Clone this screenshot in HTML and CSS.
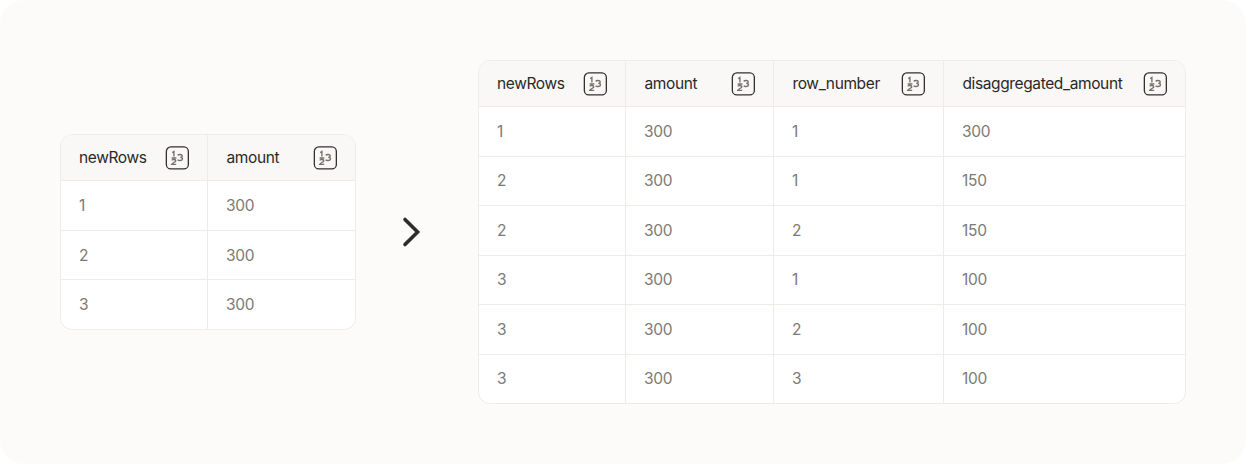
FILE: index.html
```html
<!DOCTYPE html>
<html lang="en">
<head>
<meta charset="utf-8">
<title>Disaggregated amount</title>
<link rel="stylesheet" href="styles.css">
</head>
<body>
<svg class="defs" width="0" height="0" aria-hidden="true">
  <symbol id="num" viewBox="0 0 24 24">
    <rect x="1.35" y="0.95" width="22" height="22" rx="4.5" fill="none" stroke="#33302e" stroke-width="1.3"/>
    <path d="M7.2 6.7 8.9 5.6V10.6M6.6 12H11.4M6.9 14.4C7.1 13.2 10.8 13 10.8 14.9 10.8 16 7.1 17 6.7 18.4H11.2" fill="none" stroke="#77726d" stroke-width="1.4"/>
    <path d="M12.8 9.3C13.4 8.2 17.2 8.1 17.2 9.9 17.2 10.9 16.2 11.4 15.2 11.4 16.4 11.4 17.5 11.8 17.5 13 17.5 14.9 13.4 14.9 12.7 13.6" fill="none" stroke="#77726d" stroke-width="1.4"/>
  </symbol>
</svg>
<main class="canvas">
  <section class="table left-table">
    <div class="row head">
      <div class="cell">newRows<svg class="num"><use href="#num"/></svg></div>
      <div class="cell">amount<svg class="num"><use href="#num"/></svg></div>
    </div>
    <div class="row"><div class="cell">1</div><div class="cell">300</div></div>
    <div class="row"><div class="cell">2</div><div class="cell">300</div></div>
    <div class="row"><div class="cell">3</div><div class="cell">300</div></div>
  </section>
  <svg class="chevron" viewBox="0 0 20 32" width="20" height="32" aria-hidden="true">
    <path d="M4 3.4 16.6 16 4 28.6" fill="none" stroke="#2e2c2a" stroke-width="3.6" stroke-linecap="round" stroke-linejoin="miter"/>
  </svg>
  <section class="table right-table">
    <div class="row head">
      <div class="cell">newRows<svg class="num"><use href="#num"/></svg></div>
      <div class="cell">amount<svg class="num"><use href="#num"/></svg></div>
      <div class="cell">row_number<svg class="num"><use href="#num"/></svg></div>
      <div class="cell">disaggregated_amount<svg class="num"><use href="#num"/></svg></div>
    </div>
    <div class="row"><div class="cell">1</div><div class="cell">300</div><div class="cell">1</div><div class="cell">300</div></div>
    <div class="row"><div class="cell">2</div><div class="cell">300</div><div class="cell">1</div><div class="cell">150</div></div>
    <div class="row"><div class="cell">2</div><div class="cell">300</div><div class="cell">2</div><div class="cell">150</div></div>
    <div class="row"><div class="cell">3</div><div class="cell">300</div><div class="cell">1</div><div class="cell">100</div></div>
    <div class="row"><div class="cell">3</div><div class="cell">300</div><div class="cell">2</div><div class="cell">100</div></div>
    <div class="row"><div class="cell">3</div><div class="cell">300</div><div class="cell">3</div><div class="cell">100</div></div>
  </section>
</main>
</body>
</html>
```
FILE: styles.css
```css
* { box-sizing: border-box; }
html, body { margin: 0; padding: 0; background: #fff; }
.defs { position: absolute; }
.canvas {
  width: 1246px;
  height: 464px;
  background: #fcfbf9;
  border-radius: 24px;
  display: flex;
  align-items: center;
  padding: 0 60px;
  font-family: Inter, "Liberation Sans", sans-serif;
}
.table {
  background: #fff;
  border: 1px solid #efebe7;
  border-radius: 12px;
  overflow: hidden;
  flex: none;
}
.left-table { width: 296px; }
.right-table { width: 708px; }
.chevron { flex: none; margin-left: 45px; margin-right: 57px; }
.row {
  display: grid;
  height: 49.5px;
  border-top: 1px solid #efebe7;
}
.left-table .row { grid-template-columns: 146px 1fr; }
.right-table .row { grid-template-columns: 146px 148px 170px 1fr; }
.row.head {
  height: 45px;
  border-top: 0;
  background: #f9f8f6;
}
.cell {
  display: flex;
  align-items: center;
  justify-content: space-between;
  padding: 0 18px;
  font-size: 15.5px;
  letter-spacing: -0.3px;
  color: #7d7975;
  border-left: 1px solid #efebe7;
}
.cell:first-child { border-left: 0; }
.head .cell { color: #2b2927; font-weight: 400; letter-spacing: -0.38px; padding-left: 18.5px; }
.head .cell:first-child { padding-left: 18px; }
.num { width: 24px; height: 24px; flex: none; }
```
